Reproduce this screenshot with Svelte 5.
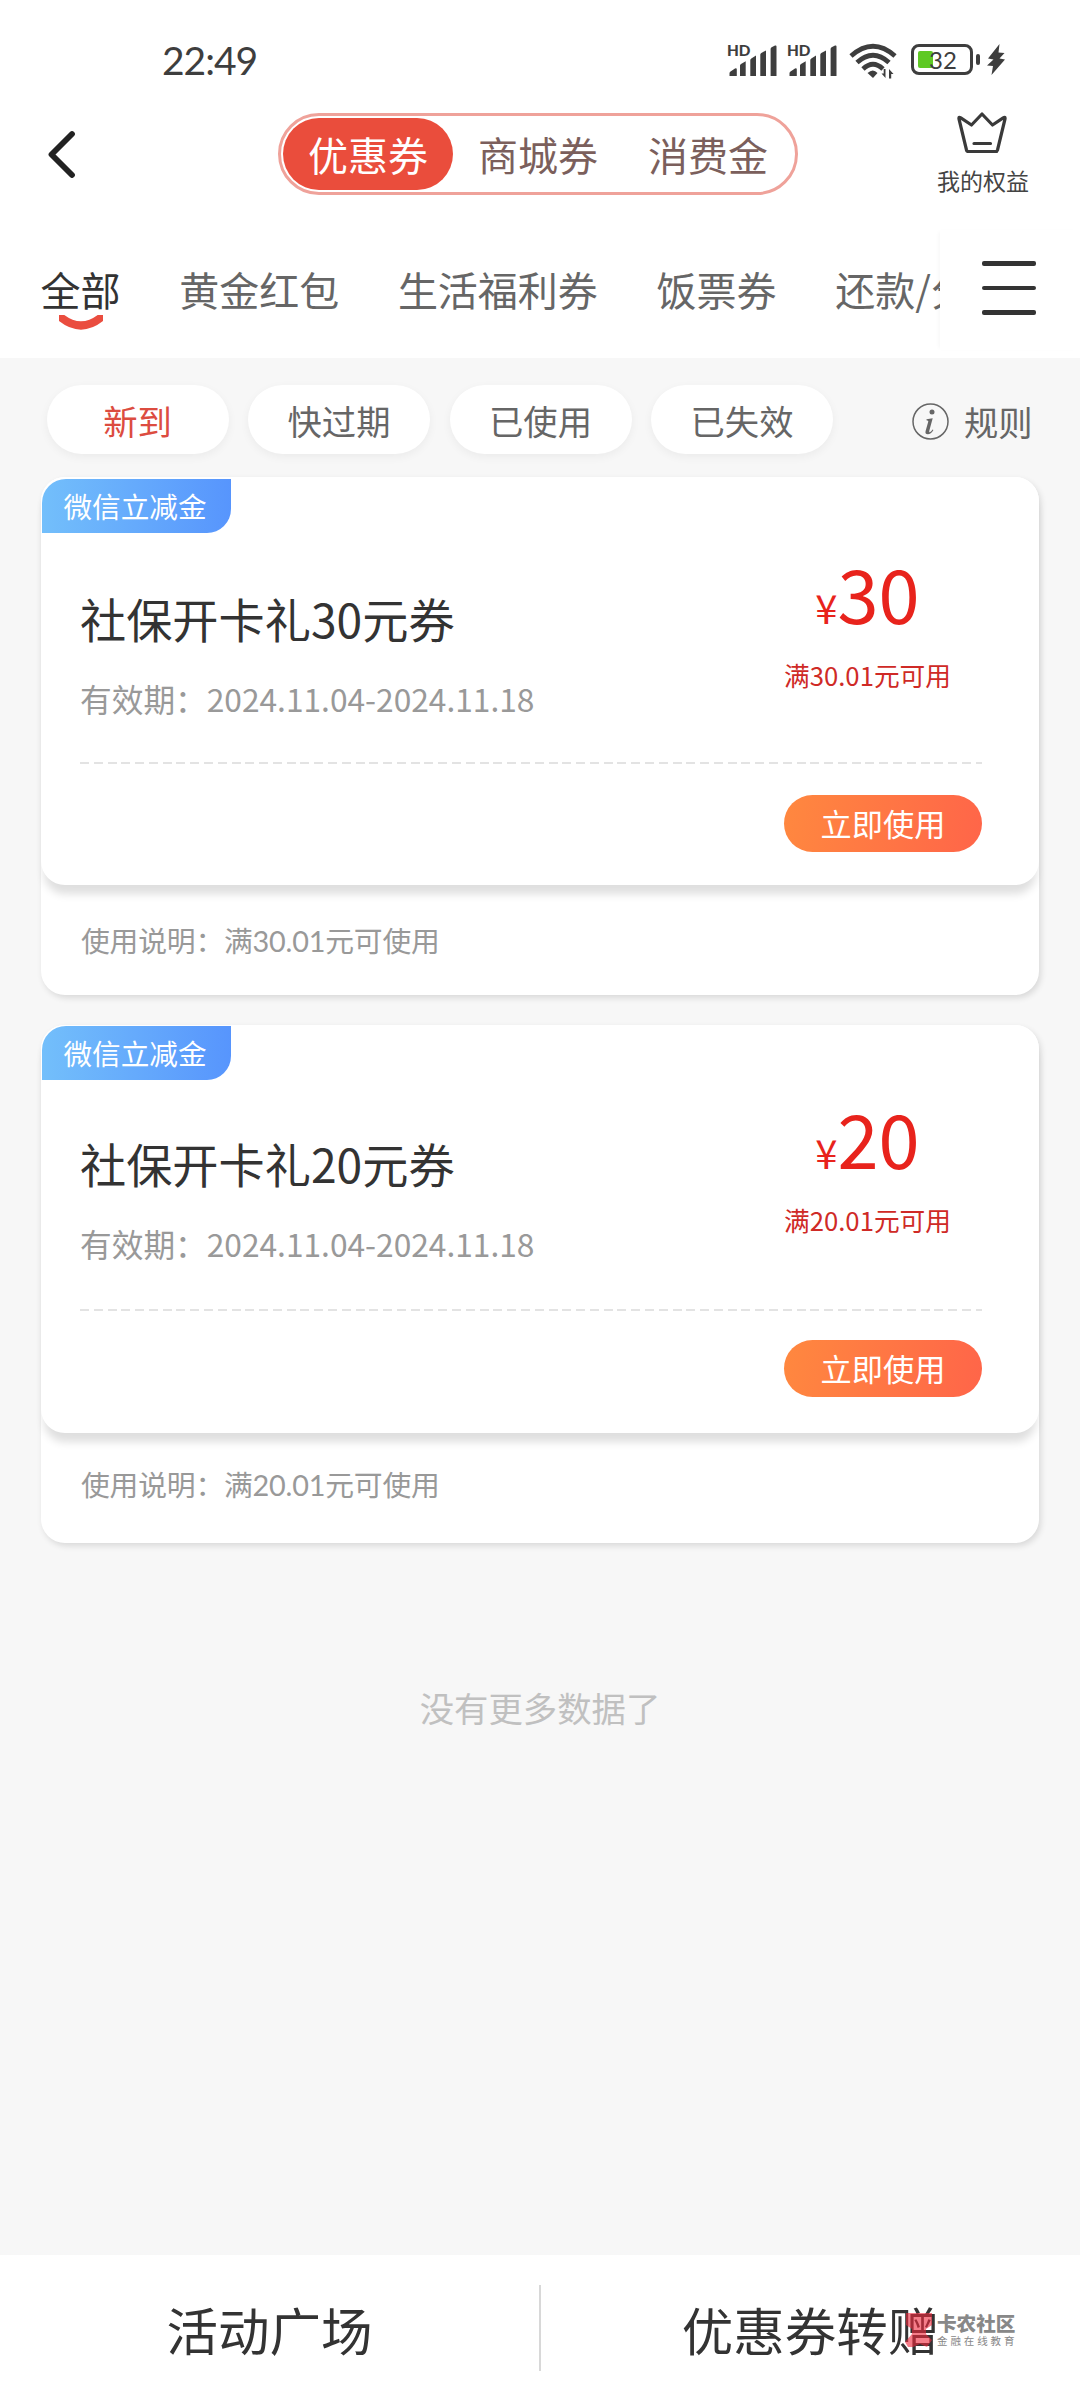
<script lang="ts">
  const segments = ['优惠券', '商城券', '消费金'];
  const tabs = ['全部', '黄金红包', '生活福利券', '饭票券', '还款/分期券'];
  const filters = ['新到', '快过期', '已使用', '已失效'];

  const coupons = [
    { tag: '微信立减金', title: '社保开卡礼30元券', period: '2024.11.04-2024.11.18', amount: '30', limit: '30.01' },
    { tag: '微信立减金', title: '社保开卡礼20元券', period: '2024.11.04-2024.11.18', amount: '20', limit: '20.01' }
  ];

  let activeSegment = $state(0);
  let activeTab = $state(0);
  let activeFilter = $state(0);
</script>

{#snippet signal()}
  <svg class="signal" width="50" height="34" viewBox="0 0 50 34">
    <text x="0" y="12.8" font-size="15.5" font-weight="900" textLength="23.500" lengthAdjust="spacingAndGlyphs">HD</text>
    <path d="M2.500 33v-2.800q0-1 1-1.800L8 25.400q1.800-.8 1.800 1V33zM13 33V22.500q0-1 1-1.600l4.700-2.600V33zM23.300 33V17q0-1 1-1.600l4.700-2.900V33zM33.300 33V11.500q0-1 1-1.600L39 7.500V33zM43.600 33V6q0-1 1-1.700L48 2.600q1.500-.6 1.500 1V33z" />
  </svg>
{/snippet}

<div class="page">
  <header class="top">
    <div class="status-bar">
      <span class="time">22:49</span>
      <div class="status-icons">
        {@render signal()}
        {@render signal()}
        <svg class="wifi" width="48" height="36" viewBox="0 0 48 36">
          <g fill="none" stroke="#3e3e3e" stroke-width="4.800">
            <path d="M2 13Q24-6.500 46 13" />
            <path d="M8 19.500Q24 5 40 19.500" />
            <path d="M14 26Q24 16.500 34 26" />
          </g>
          <path d="M18.500 30q5.500-5 10 0L24 35z" />
          <path d="M36.500 26v9l-4-4.500h2.200V26zM40 35.500v-9.500l4.500 5h-2.300v4.500z" />
        </svg>
        <div class="battery">
          <span class="level"></span>
          <span class="percent">32</span>
        </div>
        <span class="nub"></span>
        <svg class="bolt" width="18" height="31" viewBox="0 0 18 31">
          <path d="M12.500 0L1 14.500l5.500 1L0 21.500l6 .5L4.500 31 18 15.500l-5.500-1L17.500 9l-6-.5z" />
        </svg>
      </div>
    </div>

    <div class="nav-bar">
      <svg class="back" width="30" height="48" viewBox="0 0 30 48">
        <path d="M26 4L5.500 24.500 26 45" fill="none" stroke="#222" stroke-width="5.800" stroke-linecap="round" stroke-linejoin="round" />
      </svg>
      <div class="segment">
        {#each segments as label, i}
          <button class="segment-item {activeSegment === i ? 'active' : ''}" onclick={() => (activeSegment = i)}>{label}</button>
        {/each}
      </div>
      <div class="rights">
        <svg width="50" height="42" viewBox="0 0 50 42">
          <path d="M9.500 38L2 7q-.5-2.500 1.800-1.200L14.500 13 25 2l10.500 11 10.700-7.200Q48.500 4.500 48 7l-7.500 31q-.4 1.500-2 1.500h-27q-1.600 0-2-1.500zM17 31.500h16.500" fill="none" stroke="#3a3a3a" stroke-width="3.200" stroke-linejoin="round" stroke-linecap="round" />
        </svg>
        <span>我的权益</span>
      </div>
    </div>

    <div class="tab-bar">
      <div class="tabs">
        {#each tabs as tab, i}
          <button class="tab {activeTab === i ? 'active' : ''}" onclick={() => (activeTab = i)}>
            {tab}
            {#if activeTab === i}
              <svg class="smile" width="44" height="15" viewBox="0 0 44 15">
                <path d="M-2-1Q22 22 46-1" fill="none" stroke="#ea4d3f" stroke-width="8" />
              </svg>
            {/if}
          </button>
        {/each}
      </div>
      <div class="menu">
        <i></i><i></i><i></i>
      </div>
    </div>
  </header>

  <main>
    <div class="filters">
      {#each filters as filter, i}
        <button class="filter {activeFilter === i ? 'active' : ''}" onclick={() => (activeFilter = i)}>{filter}</button>
      {/each}
      <div class="rules">
        <svg width="37" height="37" viewBox="0 0 37 37">
          <circle cx="18.500" cy="18.500" r="17.500" fill="none" stroke="#666" stroke-width="1.500" />
          <circle cx="20" cy="9" r="2.500" />
          <path d="M14.500 16.200l6.200-1-3.400 12.600q-.4 1.800.6 1.500 1.300-.5 2.700-2.800l.8.500q-2.600 4.300-5.600 4.300-3 0-2.200-3.200l2.700-9.500q.3-1.300-1.800-1.400z" />
        </svg>
        <span>规则</span>
      </div>
    </div>

    <div class="list">
      {#each coupons as coupon}
        <section class="card">
          <div class="card-main">
            <span class="tag">{coupon.tag}</span>
            <div class="detail">
              <div class="info">
                <h3>{coupon.title}</h3>
                <p>有效期：{coupon.period}</p>
              </div>
              <div class="price">
                <div class="amount"><small>¥</small>{coupon.amount}</div>
                <span class="limit">满{coupon.limit}元可用</span>
              </div>
            </div>
            <div class="dash"></div>
            <button class="use">立即使用</button>
          </div>
          <p class="note">使用说明：满{coupon.limit}元可使用</p>
        </section>
      {/each}
    </div>

    <p class="no-more">没有更多数据了</p>
  </main>

  <footer>
    <button>活动广场</button>
    <span class="divider"></span>
    <button>优惠券转赠</button>
    <div class="watermark">
      <svg width="30" height="36" viewBox="0 0 30 36">
        <path d="M2 1h26v12l-6 4v5l6 6-5 7-7-3-7 3H4l-3-5 7-8v-5l-6-4z" fill="#f0283c" />
      </svg>
      <div class="watermark-text">
        <b>卡农社区</b>
        <span>金融在线教育</span>
      </div>
    </div>
  </footer>
</div>

<style>
  :global(body) {
    margin: 0;
    background: #f7f7f7;
  }

  .page {
    width: 1080px;
    height: 2400px;
    display: flex;
    flex-direction: column;
    overflow: hidden;
    background: #f7f7f7;
    color: #333;
    font-family: 'Noto Sans CJK SC', sans-serif;
  }

  button {
    border: 0;
    padding: 0;
    background: none;
    color: inherit;
    font-family: inherit;
    white-space: nowrap;
  }

  h3, p {
    margin: 0;
    font-weight: 400;
  }

  svg {
    display: block;
    flex: none;
    fill: #3e3e3e;
  }

  .top {
    height: 358px;
    flex: none;
    background: #fff;
  }

  /* status bar */
  .status-bar {
    display: flex;
    justify-content: space-between;
    height: 78px;
    padding: 43px 75px 0 162px;
    box-sizing: border-box;
    font-family: Lato, sans-serif;
    color: #3e3e3e;
  }
  .time {
    font-size: 39px;
    line-height: 34px;
    letter-spacing: -1px;
  }
  .status-icons {
    display: flex;
    align-items: flex-start;
  }
  .signal {
    margin-right: 10px;
    overflow: visible;
  }
  .wifi {
    margin: 0 14px 0 2px;
  }
  .battery {
    position: relative;
    width: 62px;
    height: 31px;
    margin-top: 1px;
    box-sizing: border-box;
    border: 3px solid #3e3e3e;
    border-radius: 8px;
    padding: 4px;
  }
  .level {
    display: block;
    width: 15px;
    height: 17px;
    border-radius: 2px;
    background: #5fc924;
  }
  .percent {
    position: absolute;
    left: 15px;
    top: 1px;
    font-size: 24px;
    line-height: 24px;
  }
  .nub {
    width: 4px;
    height: 11px;
    margin: 11px 7px 0 3px;
    border-radius: 2px;
    background: #3e3e3e;
  }
  .bolt {
    margin-top: 1px;
  }

  /* title bar */
  .nav-bar {
    display: flex;
    align-items: flex-start;
    height: 152px;
    padding: 35px 51px 0 46px;
    box-sizing: border-box;
  }
  .back {
    margin: 17px 202px 0 0;
  }
  .segment {
    display: flex;
    width: 520px;
    height: 82px;
    padding: 2px;
    box-sizing: border-box;
    border: 3px solid #efa29a;
    border-radius: 41px;
  }
  .segment-item {
    width: 170px;
    height: 72px;
    border-radius: 36px;
    font-size: 40px;
    line-height: 71px;
    color: #7b5f5c;
  }
  .segment-item.active {
    background: #ea4d3c;
    color: #fff;
  }
  .rights {
    display: flex;
    flex-direction: column;
    align-items: center;
    margin-left: auto;
    font-size: 23px;
    line-height: 34px;
    color: #444;
  }
  .rights span {
    margin-top: 9px;
  }
  .rights svg {
    margin: -1px 2px 0 0;
    fill: none;
  }

  /* category tabs */
  .tab-bar {
    display: flex;
    height: 128px;
  }
  .tabs {
    display: flex;
    gap: 58.700px;
    width: 940px;
    padding-left: 40.500px;
    box-sizing: border-box;
    overflow: hidden;
  }
  .tab {
    position: relative;
    flex: none;
    height: 118px;
    font-size: 40px;
    line-height: 116px;
    color: #666;
  }
  .tab.active {
    color: #333;
  }
  .smile {
    position: absolute;
    left: 18px;
    top: 85px;
  }
  .menu {
    display: flex;
    flex-direction: column;
    gap: 20px;
    width: 140px;
    height: 120px;
    padding: 31px 44px 0 42px;
    box-sizing: border-box;
    box-shadow: -3px 0 4px -2px rgba(0, 0, 0, 0.04);
  }
  .menu i {
    height: 4.500px;
    border-radius: 2px;
    background: #333;
  }

  /* filters */
  .filters {
    display: flex;
    align-items: center;
    gap: 19.500px;
    padding: 27px 47.500px 23px 46.500px;
    color: #666;
  }
  .filter {
    width: 182px;
    height: 69px;
    border-radius: 35px;
    background: #fff;
    box-shadow: 0 3px 10px rgba(0, 0, 0, 0.05);
    font-size: 34.300px;
    line-height: 70px;
  }
  .filter.active {
    color: #dc4c40;
  }
  .rules {
    display: flex;
    align-items: center;
    gap: 15px;
    height: 69px;
    margin-left: auto;
    padding-top: 3px;
    box-sizing: border-box;
    font-size: 34.300px;
    line-height: 71px;
  }
  .rules svg {
    fill: #666;
  }

  /* coupons */
  .list {
    display: flex;
    flex-direction: column;
    gap: 29.500px;
    padding: 0 41px;
  }
  .card {
    height: 518px;
    border-radius: 24px;
    background: #fff;
    box-shadow: 2px 3px 6px rgba(0, 0, 0, 0.12);
  }
  .card-main {
    display: flex;
    flex-direction: column;
    height: 408px;
    padding: 1.500px 57px 0 39px;
    box-sizing: border-box;
    border-radius: 24px;
    background: #fff;
    box-shadow: 0 12px 8px -3px rgba(0, 0, 0, 0.13);
  }
  .tag {
    width: 189px;
    height: 54px;
    margin-left: -38px;
    padding-right: 3px;
    box-sizing: border-box;
    border-radius: 24px 0 24px 0;
    background: linear-gradient(90deg, #73bffb, #5795fd);
    color: #fff;
    font-size: 28.600px;
    line-height: 53px;
    text-align: center;
  }
  .detail {
    display: flex;
    justify-content: space-between;
    height: 229px;
  }
  .info {
    padding-top: 51.500px;
  }
  h3 {
    font-size: 46.200px;
    line-height: 68px;
    color: #333;
  }
  .info p {
    margin-top: 23px;
    font-size: 31.700px;
    line-height: 46px;
    color: #999;
  }
  .price {
    display: flex;
    flex-direction: column;
    align-items: center;
    width: 229px;
    padding-top: 14.500px;
    color: #e8231c;
  }
  .amount {
    font-size: 74px;
    line-height: 90px;
  }
  .amount small {
    font-size: 40px;
  }
  .limit {
    margin-top: 3.500px;
    font-size: 25.700px;
    line-height: 38px;
    color: #cf2a26;
  }
  .dash {
    height: 2px;
    background: repeating-linear-gradient(90deg, #e3e3e3 0 9px, transparent 9px 13.780px);
  }
  .use {
    align-self: flex-end;
    width: 198px;
    height: 57px;
    margin-top: 31px;
    border-radius: 29px;
    background: linear-gradient(100deg, #ff883f, #ff6549);
    color: #fff;
    font-size: 31.200px;
    line-height: 54px;
  }
  .note {
    padding: 33.500px 40px 0;
    font-family: Lato, 'Noto Sans CJK SC', sans-serif;
    font-size: 28.800px;
    line-height: 44px;
    letter-spacing: -0.200px;
    color: #999;
  }
  /* content sits slightly tighter from the second card on */
  .card + .card .detail {
    margin-top: -2.500px;
    padding-bottom: 2.500px;
  }
  .card + .card .use {
    margin-top: 28.500px;
  }
  .card + .card .note {
    padding-top: 30.500px;
  }
  .no-more {
    margin-top: 139.500px;
    font-size: 34.400px;
    line-height: 50px;
    text-align: center;
    color: #c0c0c0;
  }

  /* bottom bar */
  footer {
    position: relative;
    display: flex;
    align-items: center;
    height: 145px;
    flex: none;
    margin-top: auto;
    background: #fff;
  }
  footer button {
    flex: 1;
    padding-top: 3px;
    font-size: 51.500px;
    line-height: 142px;
    color: #333;
  }
  .divider {
    width: 2px;
    height: 86px;
    background: #d8d8d8;
  }
  .watermark {
    position: absolute;
    left: 904px;
    top: 57px;
    display: flex;
    gap: 3px;
  }
  .watermark svg {
    opacity: 0.6;
  }
  .watermark-text {
    display: flex;
    flex-direction: column;
    color: #888;
  }
  .watermark b {
    font-size: 19.600px;
    line-height: 22px;
    font-weight: 900;
  }
  .watermark-text span {
    font-size: 10.500px;
    line-height: 13px;
    letter-spacing: 2.900px;
  }
</style>
